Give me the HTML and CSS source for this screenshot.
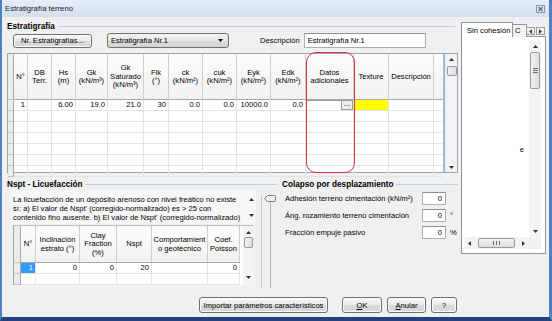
FILE: index.html
```html
<!DOCTYPE html>
<html>
<head>
<meta charset="utf-8">
<link rel="stylesheet" href="styles.css">
</head>
<body>
<div class="window">
  <div class="titlebar">
    <span class="title">Estratigrafía terreno</span>
    <svg class="close" width="9" height="8" viewBox="0 0 9 8"><rect x="0.5" y="0.5" width="8" height="7" fill="none" stroke="#8a97a8"/><path d="M2.5 2L6.5 6M6.5 2L2.5 6" stroke="#5c6a7c" stroke-width="1.2"/></svg>
  </div>
  <div class="content">
    <div class="main">
      <div class="group-head"><span>Estratigrafía</span><i class="rule"></i></div>
      <div class="toolbar">
        <div class="btn btn-nr">Nr. Estratigrafías...</div>
        <div class="combo"><span>Estratigrafía Nr.1</span><svg width="5" height="3" viewBox="0 0 5 3"><path d="M0 0H5L2.5 3z"/></svg></div>
        <span class="lbl-desc">Descripción</span>
        <div class="input desc">Estratigrafía Nr.1</div>
      </div>
      <div class="grid1">
        <div class="g1area">
          <div class="g1row g1head">
            <div class="rh"></div>
            <div class="hc">N°</div>
            <div class="hc">DB<br>Terr.</div>
            <div class="hc">Hs<br>(m)</div>
            <div class="hc">Gk<br>(kN/m³)</div>
            <div class="hc">Gk<br>Saturado<br>(kN/m³)</div>
            <div class="hc">Fik<br>(°)</div>
            <div class="hc">ck<br>(kN/m²)</div>
            <div class="hc">cuk<br>(kN/m²)</div>
            <div class="hc">Eyk<br>(kN/m²)</div>
            <div class="hc">Edk<br>(kN/m²)</div>
            <div class="hc">Datos<br>adicionales</div>
            <div class="hc">Texture</div>
            <div class="hc">Descripción</div>
            <div class="hc fill"></div>
          </div>
          <div class="g1row">
            <div class="rh"></div><div class="c">1</div><div class="c"></div><div class="c">6.00</div><div class="c">19.0</div><div class="c">21.0</div><div class="c">30</div><div class="c">0.0</div><div class="c">0.0</div><div class="c">10000.0</div><div class="c">0.0</div>
            <div class="c datos"><span class="dinput"></span><span class="dbtn">...</span></div>
            <div class="c yellow"></div><div class="c"></div><div class="c fill"></div>
          </div>
          <div class="g1row"><div class="rh"></div><div class="c"></div><div class="c"></div><div class="c"></div><div class="c"></div><div class="c"></div><div class="c"></div><div class="c"></div><div class="c"></div><div class="c"></div><div class="c"></div><div class="c"></div><div class="c"></div><div class="c"></div><div class="c fill"></div></div>
          <div class="g1row"><div class="rh"></div><div class="c"></div><div class="c"></div><div class="c"></div><div class="c"></div><div class="c"></div><div class="c"></div><div class="c"></div><div class="c"></div><div class="c"></div><div class="c"></div><div class="c"></div><div class="c"></div><div class="c"></div><div class="c fill"></div></div>
          <div class="g1row"><div class="rh"></div><div class="c"></div><div class="c"></div><div class="c"></div><div class="c"></div><div class="c"></div><div class="c"></div><div class="c"></div><div class="c"></div><div class="c"></div><div class="c"></div><div class="c"></div><div class="c"></div><div class="c"></div><div class="c fill"></div></div>
          <div class="g1row"><div class="rh"></div><div class="c"></div><div class="c"></div><div class="c"></div><div class="c"></div><div class="c"></div><div class="c"></div><div class="c"></div><div class="c"></div><div class="c"></div><div class="c"></div><div class="c"></div><div class="c"></div><div class="c"></div><div class="c fill"></div></div>
          <div class="g1row"><div class="rh"></div><div class="c"></div><div class="c"></div><div class="c"></div><div class="c"></div><div class="c"></div><div class="c"></div><div class="c"></div><div class="c"></div><div class="c"></div><div class="c"></div><div class="c"></div><div class="c"></div><div class="c"></div><div class="c fill"></div></div>
          <div class="g1row"><div class="rh"></div><div class="c"></div><div class="c"></div><div class="c"></div><div class="c"></div><div class="c"></div><div class="c"></div><div class="c"></div><div class="c"></div><div class="c"></div><div class="c"></div><div class="c"></div><div class="c"></div><div class="c"></div><div class="c fill"></div></div>
          <div class="highlight"></div>
        </div>
        <div class="gsep"></div>
        <div class="vscroll v1">
          <svg class="arr" width="5" height="3" viewBox="0 0 5 3"><path d="M0 3L2.5 0L5 3z"/></svg>
          <div class="thumb t1"></div>
          <div class="spacer"></div>
          <svg class="arr" width="5" height="3" viewBox="0 0 5 3"><path d="M0 0H5L2.5 3z"/></svg>
        </div>
      </div>

      <div class="lower">
        <div class="nspt">
          <div class="group-head"><span>Nspt - Licuefacción</span><i class="rule"></i></div>
          <div class="nspt-body">
            <div class="nspt-col">
              <div class="memo">
                <div class="memo-text">La licuefacción de un depósito arenoso con nivel freático no existe<br>sí: a) El valor de Nspt' (corregido-normalizado) es &gt; 25 con<br>contenido fino ausente. b) El valor de Nspt' (corregido-normalizado)</div>
                <div class="memo-scroll">
                  <svg width="5" height="3" viewBox="0 0 5 3"><path d="M0 3L2.5 0L5 3z"/></svg>
                  <svg width="5" height="3" viewBox="0 0 5 3"><path d="M0 0H5L2.5 3z"/></svg>
                </div>
              </div>
              <div class="grid2">
                <div class="g2area">
                  <div class="g2row g2head">
                    <div class="rh"></div>
                    <div class="hc">N°</div>
                    <div class="hc">Inclinación<br>estrato (°)</div>
                    <div class="hc">Clay<br>Fraction<br>(%)</div>
                    <div class="hc">Nspt</div>
                    <div class="hc">Comportamient<br>o geotécnico</div>
                    <div class="hc">Coef.<br>Poisson</div>
                  </div>
                  <div class="g2row">
                    <div class="rh"></div><div class="c sel">1</div><div class="c">0</div><div class="c">0</div><div class="c">20</div><div class="c"></div><div class="c">0</div>
                  </div>
                  <div class="g2row">
                    <div class="rh"></div><div class="c"></div><div class="c"></div><div class="c"></div><div class="c"></div><div class="c"></div><div class="c"></div>
                  </div>
                </div>
                <div class="vscroll v2">
                  <svg class="arr" width="5" height="3" viewBox="0 0 5 3"><path d="M0 3L2.5 0L5 3z"/></svg>
                  <div class="thumb t2"></div>
                  <div class="spacer"></div>
                  <svg class="arr" width="5" height="3" viewBox="0 0 5 3"><path d="M0 0H5L2.5 3z"/></svg>
                </div>
              </div>
            </div>
            <div class="trackbar">
              <svg width="18" height="96" viewBox="0 0 18 96">
                <line x1="1.5" y1="0" x2="1.5" y2="94" stroke="#a8a8a8" stroke-dasharray="1 1"/>
                <line x1="10.5" y1="7" x2="10.5" y2="93" stroke="#b4b4b4"/>
                <path d="M4.5 3.5L7.5 0.5H14.5Q15.5 0.5 15.5 1.5V5.5Q15.5 6.5 14.5 6.5H7.5z" fill="#eeeeee" stroke="#7d7d7d"/>
              </svg>
            </div>
          </div>
        </div>
        <div class="colapso">
          <div class="group-head"><span>Colapso por desplazamiento</span><i class="rule"></i></div>
          <div class="crow"><span class="clbl">Adhesión terreno cimentación (kN/m²)</span><div class="input num">0</div><span class="unit"></span></div>
          <div class="crow"><span class="clbl">Áng. rozamiento terreno cimentación</span><div class="input num">0</div><span class="unit">°</span></div>
          <div class="crow"><span class="clbl">Fracción empuje pasivo</span><div class="input num">0</div><span class="unit">%</span></div>
        </div>
      </div>

      <div class="footer">
        <div class="btn b-imp">Importar parámetros característicos</div>
        <div class="btn b-ok"><u>O</u>K</div>
        <div class="btn b-an"><u>A</u>nular</div>
        <div class="btn b-q">?</div>
      </div>
    </div>

    <div class="side">
      <div class="tabs">
        <div class="tab active">Sin cohesión</div>
        <div class="tab tab2">C</div>
        <div class="tabarrows">
          <div class="tarr"><svg width="3" height="5" viewBox="0 0 3 5"><path d="M3 0V5L0 2.5z"/></svg></div>
          <div class="tarr"><svg width="3" height="5" viewBox="0 0 3 5"><path d="M0 0V5L3 2.5z"/></svg></div>
        </div>
      </div>
      <div class="panel">
        <div class="lbox">
          <div class="lcontent">e</div>
          <div class="vscroll v3">
            <svg class="arr" width="5" height="3" viewBox="0 0 5 3"><path d="M0 3L2.5 0L5 3z"/></svg>
            <div class="thumb t3"><svg width="5" height="5" viewBox="0 0 5 5"><path d="M0 0.5H5M0 2.5H5M0 4.5H5" stroke="#6d6d6d"/></svg></div>
            <div class="spacer"></div>
            <svg class="arr" width="5" height="3" viewBox="0 0 5 3"><path d="M0 0H5L2.5 3z"/></svg>
          </div>
          <div class="hscroll">
            <svg class="arr" width="3" height="5" viewBox="0 0 3 5"><path d="M3 0V5L0 2.5z"/></svg>
            <div class="thumb th"><svg width="7" height="4" viewBox="0 0 7 4"><path d="M0.5 0V4M3.5 0V4M6.5 0V4" stroke="#6d6d6d"/></svg></div>
            <svg class="arr" width="3" height="5" viewBox="0 0 3 5"><path d="M0 0V5L3 2.5z"/></svg>
          </div>
          <div class="corner"></div>
        </div>
      </div>
    </div>
  </div>
</div>
</body>
</html>
```

FILE: styles.css
```css
* { box-sizing: border-box; margin: 0; padding: 0; }
html, body { width: 552px; height: 321px; overflow: hidden; background: #f0f0f0; }
body { font-family: "Liberation Sans", Arial, sans-serif; font-size: 7.6px; color: #000; }

.window {
  width: 552px; height: 321px;
  display: flex; flex-direction: column;
  background: #f0f0f0;
  border-left: 2px solid #4f80c4;
  border-right: 3px solid #4f80c4;
  border-bottom: 4px solid #21427c;
}
.titlebar {
  height: 17px; flex: none;
  display: flex; align-items: center; justify-content: space-between;
  padding: 0 4px 0 3px;
  background: linear-gradient(#e6eef8, #d2dfee);
  color: #1b1b1b;
}
.title { font-size: 7.7px; }

.content { flex: 1; display: flex; padding-left: 5px; min-height: 0; }
.main { width: 451px; display: flex; flex-direction: column; }
.side { width: 85px; margin-left: 3px; margin-top: 5px; display: flex; flex-direction: column; }

.group-head { display: flex; align-items: center; height: 11px; margin-top: 4px; font-weight: bold; font-size: 8.2px; }
.rule { flex: 1; height: 1px; background: #bcd0e6; margin: 0 3px 0 3px; }

.toolbar { display: flex; align-items: center; height: 15px; margin-top: 1px; }
.btn {
  display: flex; align-items: center; justify-content: center;
  border: 1px solid #707070; border-radius: 3px;
  background: linear-gradient(#f7f7f7, #e9e9e9 50%, #dadada 51%, #d8d8d8);
  box-shadow: inset 0 0 0 1px #fbfbfb;
  white-space: nowrap;
}
.btn-nr { margin-left: 6px; width: 79px; height: 14px; }
.combo {
  margin-left: 15px; width: 122px; height: 15px;
  display: flex; align-items: center; justify-content: space-between;
  padding: 0 5px 0 3px;
  border: 1px solid #707070; border-radius: 3px;
  background: linear-gradient(#f4f4f4, #e6e6e6 50%, #dcdcdc 51%, #d4d4d4);
}
.lbl-desc { margin-left: 31px; }
.input { background: #fff; border: 1px solid #abadb3; border-top-color: #8d9197; height: 15px; display: flex; align-items: center; }
.desc { margin-left: 4px; width: 122px; padding-left: 3px; }

/* top grid */
.grid1 { margin-top: 5px; width: 451px; height: 120px; display: flex; border: 1px solid #9ea4ab; background: #fff; }
.g1area { position: relative; width: 435px; }
.g1row { display: grid; grid-template-columns: 6px 14px 24px 24px 32px 36px 25px 34px 34px 34px 35px 48px 35px 45px 9px; height: 11px; }
.g1head { height: 46px; }
.hc {
  display: flex; align-items: center; justify-content: center; text-align: center;
  line-height: 8.4px;
  border-right: 1px solid #cfcfcf; border-bottom: 1px solid #a9a9a9;
  background: linear-gradient(#fcfcfc, #f1f1f1);
  padding-top: 1px;
}
.rh { background: #ececec; border-right: 1px solid #a9a9a9; border-bottom: 1px solid #c4c4c4; }
.c {
  border-right: 1px solid #e4e4e4; border-bottom: 1px solid #e4e4e4;
  text-align: right; padding-right: 2px; line-height: 10px; white-space: nowrap; overflow: hidden;
}
.fill { border-right: none; }
.yellow { background: #ffff00; }
.datos { display: flex; padding: 0; }
.dinput { flex: 1; background: #fff; border-top: 1px solid #9a9a9a; }
.dbtn { width: 12px; border: 1px solid #9c9c9c; background: #ececec; line-height: 6px; text-align: center; }
.highlight {
  position: absolute; left: 298px; top: -2px; width: 49px; height: 121px;
  border: 1.5px solid #d8323c; border-radius: 10px;
}
.gsep { width: 2px; background: #9fbbe0; }

.vscroll { display: flex; flex-direction: column; align-items: center; background: #f3f3f3; }
.v1 { width: 12px; padding: 4px 0 3px; border-left: 1px solid #e6e6e6; }
.arr { flex: none; fill: #333; }
.spacer { flex: 1; }
.thumb { border: 1px solid #9a9a9a; border-radius: 2px; background: linear-gradient(90deg, #f2f2f2, #dedede); }
.t1 { width: 10px; height: 10px; margin-top: 5px; }

/* lower */
.lower { display: flex; margin-top: 5px; }
.nspt { width: 271px; }
.nspt .group-head, .colapso .group-head { height: 12px; margin-top: 0; }
.nspt .rule { margin-right: 1px; }
.colapso .rule { margin-right: 0; }
.nspt-body { display: flex; }
.nspt-col { width: 251px; padding-left: 4px; }
.memo { height: 34px; width: 245px; display: flex; background: #f7f7f7; }
.memo-text { flex: 1; padding: 5px 0 0 2px; line-height: 9px; white-space: nowrap; overflow: hidden; }
.memo-scroll { width: 10px; display: flex; flex-direction: column; align-items: center; justify-content: space-between; padding: 8px 0 7px; fill: #333; }
.grid2 { margin: 1px 0 0 2px; width: 240px; height: 60px; display: flex; background: #fff; border-top: 1px solid #bfbfbf; }
.g2area { width: 228px; border-left: 1px solid #9ea4ab; }
.g2row { display: grid; grid-template-columns: 7px 15px 44px 37px 35px 56px 32px; height: 11px; }
.g2head { height: 37px; }
.sel { background: #3399ff; color: #fff; }
.v2 { width: 10px; margin-left: 2px; padding: 5px 0 6px; }
.t2 { width: 9px; height: 11px; margin-top: 3px; }
.trackbar { width: 18px; padding: 5px 0 0 2px; }

.colapso { width: 176px; margin-left: 4px; }
.crow { display: flex; align-items: center; height: 13px; margin-top: 4px; }
.crow:nth-child(2) { margin-top: 2px; }
.clbl { flex: 1; padding-left: 3px; }
.num { width: 24px; height: 13px; justify-content: flex-end; padding-right: 3px; }
.unit { width: 12px; padding-left: 4px; }

.footer { margin-top: auto; margin-bottom: 4px; display: flex; justify-content: flex-end; padding-right: 1px; }
.footer .btn { height: 16px; }
.b-imp { width: 129px; }
.b-ok { width: 40px; margin-left: 14px; }
.b-an { width: 39px; margin-left: 5px; }
.b-q { width: 26px; margin-left: 5px; }

/* side tabs */
.tabs { display: flex; height: 15px; position: relative; z-index: 1; }
.tab { border: 1px solid #8d929b; border-bottom: none; background: #fff; }
.active { width: 52px; height: 15px; padding: 3px 0 0 5px; }
.tab2 { width: 14px; height: 13px; margin-top: 2px; background: #f3f3f3; border-left: none; padding: 1px 0 0 2px; overflow: hidden; }
.tabarrows { display: flex; gap: 1px; margin: 5px 0 0 -1px; }
.tarr { width: 9px; height: 8px; border: 1px solid #a0a0a0; background: linear-gradient(#f8f8f8, #e2e2e2); display: flex; align-items: center; justify-content: center; fill: #444; }
.panel { height: 218px; margin-top: -1px; border: 1px solid #8d929b; background: #fff; padding: 4px 4px 4px 3px; }
.lbox { height: 100%; display: grid; grid-template-columns: 64px 12px; grid-template-rows: 1fr 12px; }
.lcontent { padding: 104px 5px 0 0; text-align: right; }
.v3 { width: 12px; padding: 4px 0 4px; }
.t3 { width: 10px; height: 37px; margin-top: 4px; display: flex; align-items: center; justify-content: center; }
.hscroll { display: flex; align-items: center; background: #f3f3f3; padding: 0 4px 0 3px; }
.th { width: 37px; height: 10px; margin-left: 7px; margin-right: auto; display: flex; align-items: center; justify-content: center; background: linear-gradient(#f2f2f2, #dedede); }
.corner { background: #f0f0f0; }
```
